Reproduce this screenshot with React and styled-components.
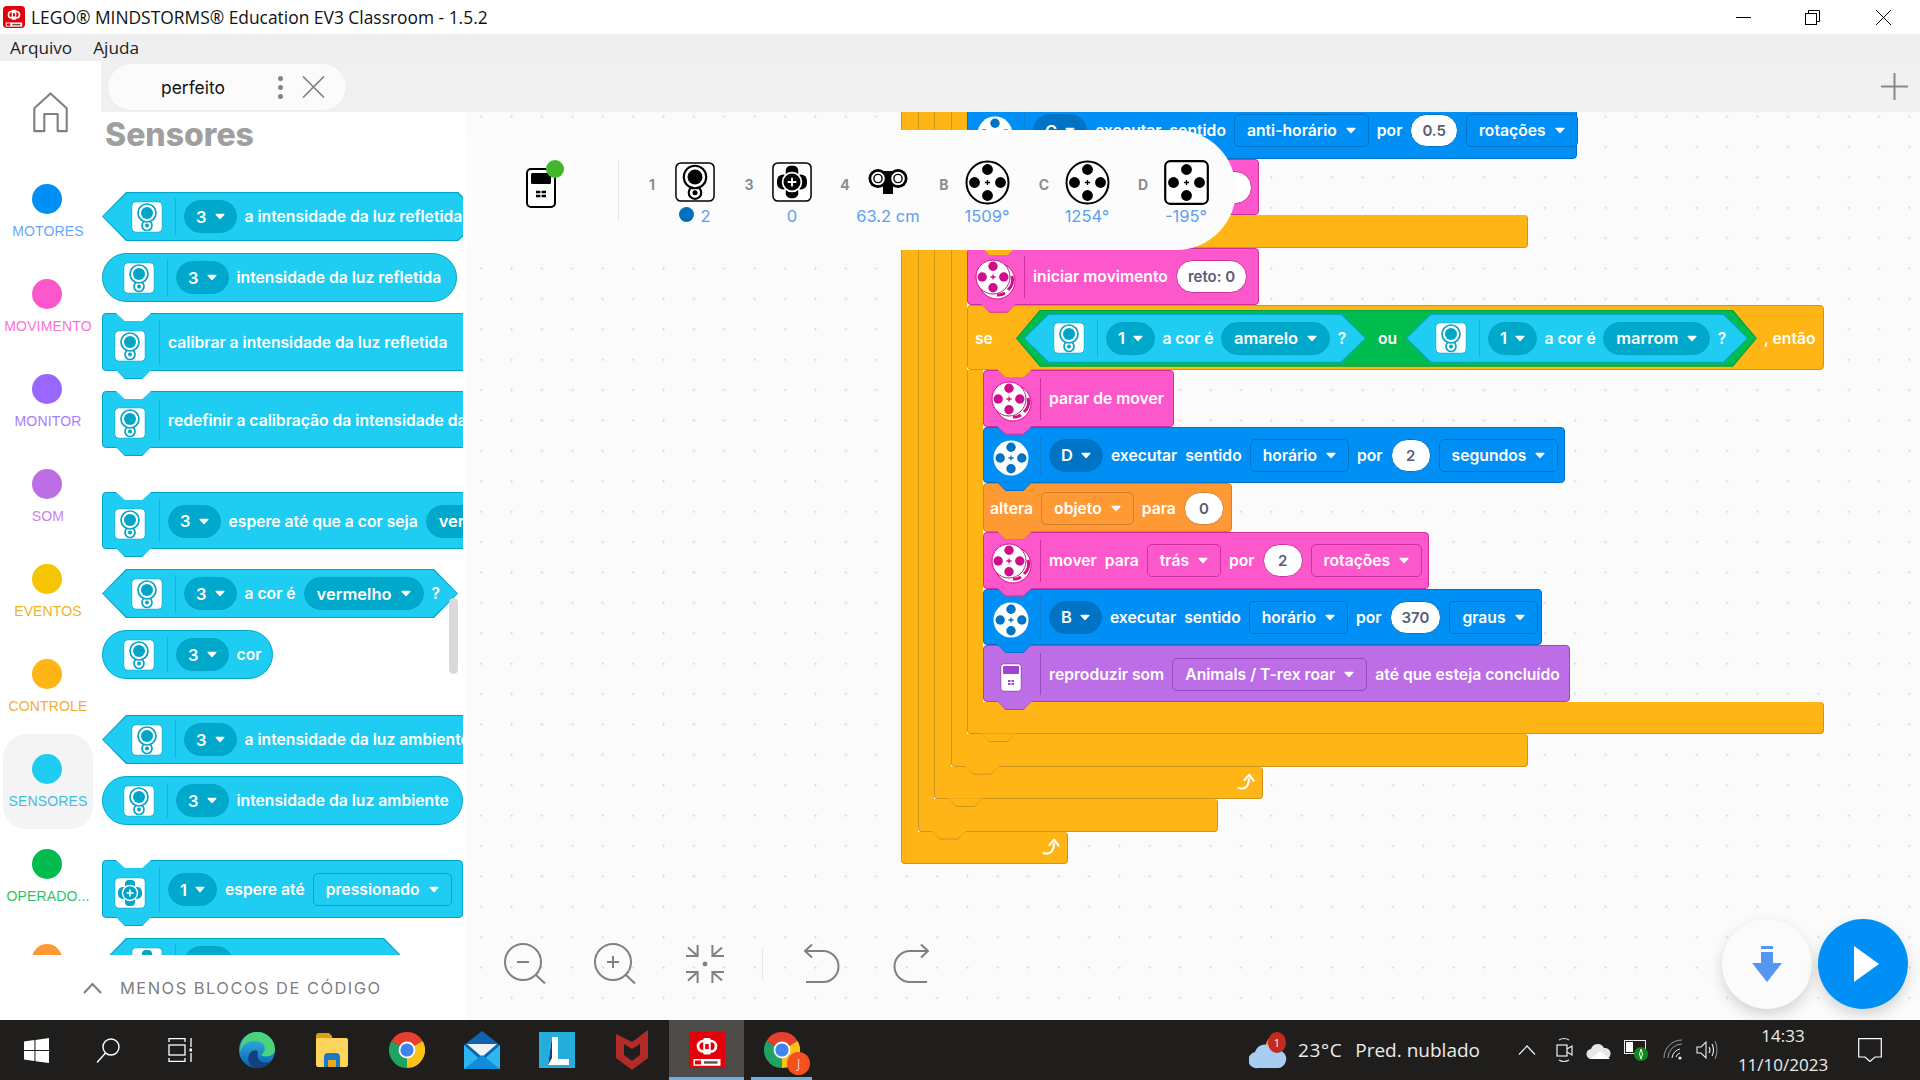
import React from "react";
import styled, { createGlobalStyle, css } from "styled-components";

const GlobalStyle = createGlobalStyle`
  html, body { margin: 0; padding: 0; height: 100%; overflow: hidden; background: #fff; }
  #root { height: 100%; }
  * { box-sizing: border-box; }
`;

const tones = {
  sensor: { fill: "#1fcdf2", edge: "#00a5c8", pill: "#00a8cb", line: "#0fb4d8" },
  motor: { fill: "#0090f5", edge: "#0073c4", pill: "#0073c4", line: "#0a7fd6" },
  move: { fill: "#fc58cc", edge: "#cf2f9e", pill: "#cf2f9e", line: "#cf2f9e" },
  sound: { fill: "#bd6ee6", edge: "#9749bf", pill: "#9749bf", line: "#9749bf" },
  variable: { fill: "#ff9933", edge: "#d47f2a", pill: "#d47f2a", line: "#d47f2a" },
  control: { fill: "#ffb515", edge: "#d09418", pill: "#d09418", line: "#d09418" },
  operator: { fill: "#00bb4d", edge: "#00a043", pill: "#00a043", line: "#00a043" },
};

const toned = css`
  --fill: ${(p) => tones[p.$tone].fill};
  --edge: ${(p) => tones[p.$tone].edge};
  --pill: ${(p) => tones[p.$tone].pill};
  --line: ${(p) => tones[p.$tone].line};
`;

const blockFont = css`
  font-family: Inter, "Open Sans", sans-serif;
  font-weight: 600;
  font-size: 15.7px;
  color: #fff;
`;

const bump = css`
  &::before,
  &::after {
    content: "";
    position: absolute;
    left: ${(p) => p.$bumpLeft ?? 13}px;
    top: 100%;
    width: 35px;
    z-index: 2;
    clip-path: polygon(0 0, 100% 0, 75% 100%, 25% 100%);
  }
  &::before {
    height: 9px;
    background: var(--edge);
  }
  &::after {
    height: 8px;
    background: var(--fill);
  }
`;

/* ---------- window chrome ---------- */

const Page = styled.div`
  width: 100%;
  height: 100vh;
  display: flex;
  flex-direction: column;
  overflow: hidden;
`;

const TitleBar = styled.div`
  height: 34px;
  flex: none;
  display: flex;
  align-items: center;
  background: #fff;
  padding-left: 2px;
`;

const TitleText = styled.span`
  margin-left: 5px;
  font-family: "Open Sans", sans-serif;
  font-size: 17.4px;
  color: #111;
  white-space: pre;
`;

const WindowButtons = styled.div`
  margin-left: auto;
  display: flex;
  align-items: center;
  padding-right: 29px;
  gap: 54px;
  & > svg:last-child {
    margin-left: 2px;
  }
`;

const MenuBar = styled.div`
  height: 27px;
  flex: none;
  display: flex;
  align-items: center;
  gap: 21px;
  padding-left: 10px;
  background: #efefef;
  font-family: "Open Sans", sans-serif;
  font-size: 17.2px;
  color: #222;
`;

const Main = styled.div`
  flex: 1;
  min-height: 0;
  display: grid;
  grid-template-columns: 101px 365px 1fr;
  grid-template-rows: 51px 843px 65px;
  background: #fff;
`;

/* ---------- category rail ---------- */

const Rail = styled.nav`
  grid-column: 1;
  grid-row: 1 / 3;
  background: #fff;
  overflow: hidden;
`;

const HomeSlot = styled.div`
  height: 103px;
  padding: 31px 0 0 32px;
`;

const Category = styled.div`
  width: 90px;
  height: 95px;
  margin-left: 3px;
  padding-top: 20px;
  display: flex;
  flex-direction: column;
  align-items: center;
  border-radius: 24px;
  background: ${(p) => (p.$active ? "#f4f4f4" : "transparent")};
`;

const CategoryDot = styled.span`
  width: 30px;
  height: 30px;
  margin-right: 2px;
  border-radius: 50%;
  background: ${(p) => p.$color};
`;

const CategoryName = styled.span`
  margin-top: 9px;
  font-family: "Liberation Sans", Arial, sans-serif;
  font-size: 14px;
  line-height: 16px;
  letter-spacing: 0.15px;
  color: ${(p) => p.$color};
  opacity: 0.85;
  white-space: nowrap;
`;

/* ---------- tab bar ---------- */

const TabBar = styled.div`
  grid-column: 2 / 4;
  grid-row: 1;
  background: #f0f0f0;
  display: flex;
  align-items: flex-start;
  padding: 3px 12px 0 7px;
`;

const Tab = styled.div`
  width: 238px;
  height: 46px;
  display: flex;
  align-items: center;
  border-radius: 23px;
  background: #fbfbfb;
  box-shadow: 0 0 0 1px #ececec;
`;

const TabName = styled.span`
  width: 170px;
  text-align: center;
  font-family: Inter, sans-serif;
  font-size: 17.4px;
  color: #111;
`;

const TabDots = styled.span`
  display: flex;
  flex-direction: column;
  gap: 4px;
  & > i {
    width: 5px;
    height: 5px;
    border-radius: 50%;
    background: #858585;
  }
`;

const TabClose = styled.svg`
  margin-left: 19px;
`;

const AddTab = styled.svg`
  margin: 9px 0 0 auto;
`;

/* ---------- palette ---------- */

const Palette = styled.aside`
  grid-column: 2;
  grid-row: 2;
  position: relative;
  background: #fff;
  overflow: hidden;
`;

const PaletteTitle = styled.h2`
  margin: 0;
  height: 80px;
  padding: 5px 0 0 4px;
  font-family: Inter, sans-serif;
  font-weight: 800;
  font-size: 32px;
  line-height: 36px;
  color: #9f9f9f;
`;

const PaletteClip = styled.div`
  width: 362px;
  height: 763px;
  padding-left: 1px;
  overflow: hidden;
`;

const PaletteScroll = styled.div`
  position: absolute;
  left: 348px;
  top: 486px;
  width: 9px;
  height: 76px;
  border-radius: 5px;
  background: #d9d9d9;
  z-index: 3;
`;

const Footer = styled.div`
  grid-column: 1 / 3;
  grid-row: 3;
  background: #fff;
  display: flex;
  align-items: center;
  padding: 0 0 0 83px;
  gap: 18px;
  font-family: Inter, sans-serif;
  font-size: 16.5px;
  letter-spacing: 1.45px;
  color: #7f7f7f;
`;

/* ---------- blocks ---------- */

const IconSlot = styled.div`
  flex: none;
  width: 57px;
  height: calc(100% - 12px);
  display: flex;
  align-items: center;
  justify-content: center;
  border-right: 1px solid var(--line);
`;

const StackBlock = styled.div`
  ${toned}
  ${bump}
  ${blockFont}
  position: relative;
  flex: none;
  display: flex;
  align-items: center;
  width: ${(p) => (p.$width ? `${p.$width}px` : "max-content")};
  height: ${(p) => p.$height ?? 56.7}px;
  margin-top: ${(p) => p.$top ?? 0}px;
  padding-top: ${(p) => p.$padTop ?? 1}px;
  background: var(--fill);
  border: 1px solid var(--edge);
  border-radius: 4px;
  & > ${IconSlot} > svg {
    transform: translate(-1px, 3px);
  }
`;

const RoundBlock = styled.div`
  ${toned}
  ${blockFont}
  position: relative;
  display: flex;
  align-items: center;
  width: ${(p) => (p.$width ? `${p.$width}px` : "max-content")};
  height: 49px;
  margin-top: ${(p) => p.$top ?? 0}px;
  padding: 0 12px 0 8px;
  background: var(--fill);
  border: 1px solid var(--edge);
  border-radius: 25px;
`;

const hexPoints = (w) =>
  `polygon(${w}px 0, calc(100% - ${w}px) 0, 100% 50%, calc(100% - ${w}px) 100%, ${w}px 100%, 0 50%)`;

const HexBlock = styled.div`
  ${toned}
  ${blockFont}
  position: relative;
  flex: none;
  display: flex;
  align-items: center;
  width: ${(p) => (p.$width ? `${p.$width}px` : "max-content")};
  height: ${(p) => p.$height ?? 49}px;
  margin-top: ${(p) => p.$top ?? 0}px;
  padding: 0 ${(p) => p.$padRight ?? 20}px 0 ${(p) => p.$padLeft ?? 17}px;
  background: var(--edge);
  clip-path: ${hexPoints(24)};
  &::before {
    content: "";
    position: absolute;
    inset: 1px;
    z-index: -1;
    background: var(--fill);
    clip-path: ${hexPoints(24)};
  }
`;

const Notch = styled.span`
  position: absolute;
  left: 13px;
  top: -1px;
  width: 35px;
  height: 8px;
  background: #fff;
  clip-path: polygon(0 0, 100% 0, 75% 100%, 25% 100%);
`;

const Fields = styled.div`
  display: flex;
  align-items: center;
  gap: ${(p) => p.$gap ?? 8}px;
  padding-left: ${(p) => p.$pad ?? 8}px;
  padding-right: ${(p) => p.$padEnd ?? 0}px;
  white-space: pre;
`;

const MenuField = styled.div`
  flex: none;
  height: 33px;
  min-width: ${(p) => p.$min ?? 0}px;
  display: flex;
  align-items: center;
  justify-content: space-between;
  gap: ${(p) => (p.$round && !p.$wide ? 8 : 9)}px;
  padding: 0 ${(p) => (p.$round && !p.$wide ? 11 : 12)}px;
  border: 1px solid var(--edge);
  border-radius: ${(p) => (p.$round ? "17px" : "5px")};
  background: ${(p) => (p.$round ? "var(--pill)" : "var(--fill)")};
  font-size: ${(p) => (p.$round ? 16.5 : 15.7)}px;
`;

const ValueField = styled.div`
  flex: none;
  min-width: ${(p) => p.$min ?? 40}px;
  height: 33px;
  display: flex;
  align-items: center;
  justify-content: center;
  padding: 0 11px;
  background: #fff;
  border: 1px solid var(--edge);
  border-radius: 17px;
  color: #575e75;
  font-size: 15px;
`;

const Caret = () => (
  <svg width="10" height="7" viewBox="0 0 11 7">
    <path d="M1.2 1.2 H9.8 L5.5 5.8 Z" fill="#fff" stroke="#fff" strokeWidth="1.5" strokeLinejoin="round" />
  </svg>
);

const Pill = ({ children, wide }) => (
  <MenuField $round $wide={wide}>
    {children}
    <Caret />
  </MenuField>
);

const Menu = ({ children, min }) => (
  <MenuField $min={min}>
    {children}
    <Caret />
  </MenuField>
);

/* c-blocks on the canvas */

const CBlock = styled.div`
  ${toned}
  display: flex;
  flex-direction: column;
  align-items: flex-start;
`;

const CMouth = styled.div`
  display: flex;
  align-items: stretch;
`;

const CArm = styled.div`
  flex: none;
  width: ${(p) => p.$width ?? 16.5}px;
  background: var(--fill);
  border-left: 1px solid var(--edge);
`;

const CBody = styled.div`
  display: flex;
  flex-direction: column;
  align-items: flex-start;
`;

const CFoot = styled.div`
  ${(p) => !p.$flat && bump}
  position: relative;
  width: ${(p) => p.$width}px;
  height: 32.4px;
  display: flex;
  align-items: center;
  justify-content: flex-end;
  padding-right: 7px;
  background: var(--fill);
  border: 1px solid var(--edge);
  border-top: none;
  border-radius: 0 4px 4px 4px;
`;

const Band = styled(CFoot)`
  height: 32.6px;
`;

const Canvas = styled.section`
  grid-column: 3;
  grid-row: 2 / 4;
  position: relative;
  overflow: hidden;
  background-color: #fbfbfb;
  background-image: radial-gradient(circle at center, #dfdfdf 0 1px, transparent 1.3px);
  background-size: 30.4px 30.4px;
  background-position: 0px -10.6px;
`;

const Script = styled.div`
  position: absolute;
  left: 435px;
  top: -10px;
`;

/* ---------- robot status panel ---------- */

const StatusPanel = styled.div`
  position: absolute;
  left: 0;
  top: 18px;
  width: 770px;
  height: 120px;
  z-index: 5;
  display: flex;
  align-items: flex-start;
  padding: 30px 0 0 60px;
  background: #fcfcfc;
  border-radius: 0 60px 60px 0;
`;

const BrickSlot = styled.div`
  position: relative;
  flex: none;
  width: 30px;
  margin-top: 8px;
`;

const ConnectedDot = styled.span`
  position: absolute;
  right: -8px;
  top: -8px;
  width: 18px;
  height: 18px;
  border-radius: 50%;
  background: #41b72a;
`;

const PanelDivider = styled.span`
  flex: none;
  width: 1px;
  height: 60px;
  margin: 0 20px 0 62px;
  background: #e6e6e6;
`;

const Port = styled.div`
  flex: none;
  width: ${(p) => p.$width}px;
  display: flex;
  align-items: flex-start;
`;

const PortLabel = styled.span`
  flex: none;
  width: 26px;
  height: 44px;
  line-height: 44px;
  margin-top: 3px;
  text-align: center;
  font-family: Inter, sans-serif;
  font-weight: 700;
  font-size: 14px;
  color: #8c8c8c;
`;

const PortBody = styled.div`
  flex: none;
  width: 58px;
  margin-left: 1px;
  display: flex;
  flex-direction: column;
  align-items: center;
`;

const PortIcon = styled.div`
  height: 44px;
  display: flex;
  align-items: center;
  justify-content: center;
`;

const PortReading = styled.div`
  margin-top: 1px;
  height: 22px;
  display: flex;
  align-items: center;
  gap: 6px;
  font-family: Inter, sans-serif;
  font-size: 16.5px;
  color: #5a9ff0;
  white-space: nowrap;
`;

const ColorMark = styled.span`
  width: 15px;
  height: 15px;
  margin-top: -4px;
  border-radius: 50%;
  background: #006fbe;
`;

/* ---------- canvas tools ---------- */

const ToolRow = styled.div`
  position: absolute;
  left: 38px;
  top: 831px;
  display: flex;
  align-items: center;
  z-index: 4;
`;

const ToolIcon = styled.svg`
  flex: none;
  margin-left: ${(p) => p.$left ?? 0}px;
`;

const ToolDivider = styled.span`
  width: 1px;
  height: 30px;
  margin-left: 36px;
  background: #e4e4e4;
`;

const RunButtons = styled.div`
  position: absolute;
  left: 1256px;
  top: 807px;
  display: flex;
  gap: 6px;
  z-index: 4;
`;

const RoundButton = styled.div`
  width: 90px;
  height: 90px;
  display: flex;
  align-items: center;
  justify-content: center;
  padding-left: ${(p) => p.$nudge ?? 0}px;
  border-radius: 50%;
  background: ${(p) => p.$bg};
  box-shadow: ${(p) => (p.$raised ? "0 6px 14px rgba(0,0,0,.16)" : "none")};
`;

/* ---------- taskbar ---------- */

const Taskbar = styled.div`
  height: 60px;
  flex: none;
  display: flex;
  align-items: center;
  background: #201e1d;
  font-family: "Open Sans", sans-serif;
  color: #ececec;
`;

const SysSlot = styled.div`
  width: 72px;
  height: 60px;
  display: flex;
  align-items: center;
  justify-content: center;
`;

const AppGroup = styled.div`
  display: flex;
  margin-left: 3px;
`;

const AppSlot = styled.div`
  position: relative;
  width: 75px;
  height: 60px;
  display: flex;
  align-items: center;
  justify-content: center;
  background: ${(p) => (p.$active ? "#4d4a48" : "transparent")};
  ${(p) =>
    p.$open &&
    css`
      &::after {
        content: "";
        position: absolute;
        left: ${p.$active ? 0 : 7}px;
        right: ${p.$active ? 0 : 7}px;
        bottom: 0;
        height: 3px;
        background: #6caee0;
      }
    `}
`;

const Tray = styled.div`
  margin-left: auto;
  display: flex;
  align-items: center;
  padding-right: 38px;
`;

const Weather = styled.div`
  position: relative;
  width: 38px;
  height: 40px;
  margin-right: 11px;
`;

const WeatherBadge = styled.span`
  position: absolute;
  right: 1px;
  top: 2px;
  width: 18px;
  height: 21px;
  border-radius: 50%;
  background: #c32a1e;
  font-size: 11px;
  line-height: 21px;
  text-align: center;
  color: #fff;
`;

const TrayText = styled.span`
  font-size: 19px;
  letter-spacing: ${(p) => p.$spread ?? 0}px;
  margin-right: ${(p) => p.$right ?? 0}px;
  white-space: nowrap;
`;

const TrayIcon = styled.svg`
  flex: none;
  margin-right: ${(p) => p.$right ?? 0}px;
`;

const Clock = styled.div`
  width: 100px;
  display: flex;
  flex-direction: column;
  align-items: center;
  gap: 5px;
  font-size: 17px;
  line-height: 24px;
  margin-right: 25px;
`;

/* ---------- drawings ---------- */

const LegoMark = ({ w, h, rx = 4 }) => (
  <svg width={w} height={h} viewBox="0 0 24 24">
    <rect width="24" height="24" rx={rx} fill="#e3000b" />
    <rect x="6" y="6" width="12" height="7" rx="3.5" fill="none" stroke="#fff" strokeWidth="1.8" />
    <rect x="9.5" y="4" width="5" height="11" rx="1" fill="#fff" />
    <rect x="10.8" y="8" width="2.4" height="3.4" fill="#e3000b" />
    <rect x="3" y="18" width="18" height="4.5" fill="#fff" />
    <rect x="4" y="19" width="4" height="2.6" fill="#e3000b" />
    <rect x="10" y="19.5" width="9" height="1.6" fill="#555" />
  </svg>
);

const HomeIcon = () => (
  <svg width="37" height="41" viewBox="0 0 37 43" fill="none" stroke="#7f7f7f" strokeWidth="2.2" strokeLinejoin="round">
    <path d="M1.5 17 L18.5 1.5 L35.5 17 V41 H26 V23 H12 V41 H1.5 Z" />
  </svg>
);

const ColorSensor = ({ color = "#00a5c8", size = 32, frame }) => (
  <svg width={size} height={size} viewBox="0 0 32 32">
    <rect x="0.75" y="0.75" width="30.5" height="30.5" rx="4" fill="#fff" stroke={frame ?? "#0fb4d8"} strokeWidth={frame ? 1.2 : 1} />
    <circle cx="16" cy="24.5" r="5" fill="#fff" stroke={color} strokeWidth="1.7" />
    <circle cx="16" cy="12" r="9" fill="#fff" stroke={color} strokeWidth="1.7" />
    <circle cx="16" cy="12" r="6" fill={color} />
    <circle cx="16" cy="24.5" r="2" fill={color} />
  </svg>
);

const GyroSensor = ({ color = "#00a5c8", size = 32, frame }) => (
  <svg width={size} height={size} viewBox="0 0 32 32">
    <rect x="0.75" y="0.75" width="30.5" height="30.5" rx="4" fill="#fff" stroke={frame ?? "#0fb4d8"} strokeWidth={frame ? 1.2 : 1} />
    <rect x="11" y="3" width="10" height="10" rx="4" fill={color} />
    <rect x="11" y="19" width="10" height="10" rx="4" fill={color} />
    <rect x="4" y="10" width="10" height="12" rx="5" fill={color} />
    <rect x="18" y="10" width="10" height="12" rx="5" fill={color} />
    <circle cx="16" cy="16" r="7.5" fill={color} stroke="#fff" strokeWidth="1.4" />
    <path d="M16 12.5 V19.5 M12.5 16 H19.5" stroke="#fff" strokeWidth="1.5" />
  </svg>
);

const UltrasonicSensor = () => (
  <svg width="40" height="26" viewBox="0 0 40 26">
    <rect x="15" y="17" width="10" height="8" fill="#000" />
    <rect x="9" y="2" width="22" height="15" fill="#000" />
    <circle cx="10" cy="9.5" r="9.5" fill="#000" />
    <circle cx="30" cy="9.5" r="9.5" fill="#000" />
    <circle cx="10" cy="9.5" r="6.8" fill="#fff" />
    <circle cx="30" cy="9.5" r="6.8" fill="#fff" />
    <circle cx="10" cy="9.5" r="4.8" fill="#000" />
    <circle cx="30" cy="9.5" r="4.8" fill="#000" />
    <circle cx="10" cy="9.5" r="3.4" fill="#fff" />
    <circle cx="30" cy="9.5" r="3.4" fill="#fff" />
  </svg>
);

const WheelFace = ({ color, cx = 18, cy = 18, r = 4.7, d = 10.8 }) => (
  <>
    <circle cx={cx} cy={cy - d} r={r} fill={color} />
    <circle cx={cx} cy={cy + d} r={r} fill={color} />
    <circle cx={cx - d} cy={cy} r={r} fill={color} />
    <circle cx={cx + d} cy={cy} r={r} fill={color} />
    <path d={`M${cx} ${cy - 2.6} V${cy + 2.6} M${cx - 2.6} ${cy} H${cx + 2.6}`} stroke={color} strokeWidth="1.3" />
  </>
);

const MotorIcon = ({ color }) => (
  <svg width="36" height="36" viewBox="0 0 36 36">
    <circle cx="18" cy="18" r="17.5" fill="#fff" />
    <WheelFace color={color} />
  </svg>
);

const PortWheel = ({ square }) => (
  <svg width="45" height="45" viewBox="0 0 45 45">
    {square ? (
      <rect x="1.2" y="1.2" width="42.6" height="42.6" rx="5" fill="#fff" stroke="#000" strokeWidth="2.2" />
    ) : (
      <circle cx="22.5" cy="22.5" r="21" fill="#fff" stroke="#000" strokeWidth="2" />
    )}
    <WheelFace color="#000" cx={22.5} cy={22.5} r={5.4} d={13} />
  </svg>
);

const MoveIcon = () => (
  <svg width="41" height="41" viewBox="0 0 41 41">
    <circle cx="22" cy="22" r="18" fill="#fff" stroke="#cf0e8c" strokeWidth="1" />
    <path d="M37 17 A14 14 0 0 1 33 31 M30 34 A12 12 0 0 1 22 36" fill="none" stroke="#cf0e8c" strokeWidth="3" />
    <circle cx="18" cy="18" r="17" fill="#fff" stroke="#cf0e8c" strokeWidth="1" />
    <WheelFace color="#cf0e8c" />
  </svg>
);

const SoundBrick = () => (
  <svg width="22" height="29" viewBox="0 0 22 29">
    <rect x="0.75" y="0.75" width="20.5" height="27.5" rx="3" fill="#fff" stroke="#9749bf" />
    <rect x="3" y="3" width="16" height="8" rx="1" fill="#a241d4" />
    <path d="M8 18 H14 M8 21 H14" stroke="#9749bf" strokeWidth="2" />
    <path d="M11 16 V23" stroke="#fff" strokeWidth="1" />
  </svg>
);

const PanelBrick = () => (
  <svg width="30" height="40" viewBox="0 0 30 40">
    <rect x="1" y="1" width="28" height="38" rx="4" fill="#fff" stroke="#000" strokeWidth="2" />
    <rect x="5" y="5" width="20" height="11" rx="1.5" fill="#000" />
    <path d="M10 24 H20 M10 28 H20" stroke="#000" strokeWidth="2.4" />
    <path d="M15 22 V30" stroke="#fff" strokeWidth="1.2" />
  </svg>
);

const LoopArrow = () => (
  <svg width="18" height="18" viewBox="0 0 18 18" fill="none" stroke="#fff" strokeWidth="2.2" strokeLinecap="round" strokeLinejoin="round">
    <path d="M1.5 15 C6 16.5 11.5 15.5 12 6" />
    <path d="M7.5 7 L12.3 1.8 L16.5 7.5" />
  </svg>
);

const ZoomIcon = ({ plus, left }) => (
  <ToolIcon $left={left} width="44" height="41" viewBox="0 0 44 41" fill="none" stroke="#808080" strokeWidth="2">
    <circle cx="19" cy="19" r="18" />
    <path d="M32 32 L41 40.5" />
    <path d="M13 19 H25" />
    {plus && <path d="M19 13 V25" />}
  </ToolIcon>
);

const RecenterIcon = ({ left }) => (
  <ToolIcon $left={left} width="42" height="40" viewBox="0 0 42 40" fill="none" stroke="#808080" strokeWidth="2">
    <path d="M2 12 H13.6 V1 M13.6 12 L4 3.5" />
    <path d="M40 12 H28.4 V1 M28.4 12 L38 3.5" />
    <path d="M2 28 H13.6 V39 M13.6 28 L4 36.5" />
    <path d="M40 28 H28.4 V39 M28.4 28 L38 36.5" />
    <circle cx="21" cy="20" r="2.4" fill="#808080" stroke="none" />
  </ToolIcon>
);

const UndoIcon = ({ left, flip }) => (
  <ToolIcon $left={left} width="36" height="40" viewBox="0 0 36 40" fill="none" stroke="#808080" strokeWidth="2">
    <g transform={flip ? "matrix(-1 0 0 1 36 0)" : undefined}>
      <path d="M1 7 H19 A15.5 15.5 0 0 1 19 38 H2" />
      <path d="M8 0.5 L1 7 L8 13.5" />
    </g>
  </ToolIcon>
);

const ChromeIcon = ({ size = 36 }) => (
  <svg width={size} height={size} viewBox="0 0 36 36">
    <path d="M18 0 A18 18 0 0 1 33.6 9 L18 18 L2.4 9 A18 18 0 0 1 18 0 Z" fill="#e7402f" />
    <path d="M33.6 9 A18 18 0 0 1 18 36 L18 18 Z" fill="#fbc116" />
    <path d="M18 36 A18 18 0 0 1 2.4 9 L18 18 Z" fill="#1ea362" />
    <circle cx="18" cy="18" r="8.4" fill="#fff" />
    <circle cx="18" cy="18" r="6.6" fill="#3f84ec" />
  </svg>
);

const EdgeIcon = () => (
  <svg width="36" height="36" viewBox="0 0 36 36">
    <defs>
      <linearGradient id="edgeFill" x1="0" y1="0" x2="0" y2="1">
        <stop offset="0" stopColor="#35c1e1" />
        <stop offset="1" stopColor="#0b5fb4" />
      </linearGradient>
    </defs>
    <circle cx="18" cy="18" r="18" fill="url(#edgeFill)" />
    <path d="M18 0 A18 18 0 0 1 36 18 C36 24 26 26 22 23 C28 20 28 8 14 9 C9 9 3 13 1 20 C1 9 8 0 18 0 Z" fill="#4bd37c" />
    <path d="M19 20 C16 30 27 33 31 29 C27 35 22 36 18 36 C10 36 7 27 11 21 C13 18 18 17 19 20 Z" fill="#123f7d" />
  </svg>
);

const FolderIcon = () => (
  <svg width="32" height="34" viewBox="0 0 32 34">
    <path d="M0 3 Q0 0 3 0 H13 L16 3 V8 H0 Z" fill="#dd9f12" />
    <rect y="5" width="32" height="29" rx="2" fill="#ffd45c" />
    <path d="M8 34 V24 Q8 20 12 20 H20 Q24 20 24 24 V34 H20 V27 H12 V34 Z" fill="#1d79c4" />
    <rect x="12" y="27" width="8" height="7" fill="#e8a91a" />
  </svg>
);

const MailIcon = () => (
  <svg width="36" height="38" viewBox="0 0 36 38">
    <path d="M18 0 L36 14 V38 H0 V14 Z" fill="#0d63b0" />
    <path d="M0 14 L18 30 L36 14 V38 H0 Z" fill="#2fb6f0" />
    <path d="M3 13 H33 L18 26 Z" fill="#eef2f5" />
    <path d="M0 38 L18 24 L36 38 Z" fill="#0f8cdb" />
  </svg>
);

const LauncherIcon = () => (
  <svg width="36" height="36" viewBox="0 0 36 36">
    <rect width="36" height="36" fill="#25aedb" />
    <path d="M13 5 H19 V27 H30 V33 H9 Z" fill="#fff" />
    <path d="M13 5 V26 L9 33 Z" fill="#123f8c" />
  </svg>
);

const ShieldIcon = () => (
  <svg width="32" height="40" viewBox="0 0 32 40">
    <path d="M0 4 L16 12 L32 0 V28 L16 40 L0 28 Z" fill="#b22a2a" />
    <path d="M8 14 L16 19 L24 14 V25 L16 31 L8 25 Z" fill="#201e1d" />
  </svg>
);

const AppAvatar = styled.span`
  position: absolute;
  left: 43px;
  top: 32px;
  width: 23px;
  height: 23px;
  border-radius: 50%;
  background: #f4511e;
  color: #ffd0bd;
  font-size: 12px;
  line-height: 23px;
  text-align: center;
`;

const categories = [
  ["MOTORES", "#0090f5", "#4c97ff"],
  ["MOVIMENTO", "#fc58cc", "#fc58cc"],
  ["MONITOR", "#9966ff", "#9966ff"],
  ["SOM", "#bd6ee6", "#bd6ee6"],
  ["EVENTOS", "#f5c402", "#eaa800"],
  ["CONTROLE", "#ffb515", "#f0a010"],
  ["SENSORES", "#1fcdf2", "#1fb4dc", true],
  ["OPERADO...", "#00bb4d", "#00bb4d"],
  ["", "#ff9933", "#ff9933"],
];

const SensorIcon = () => (
  <IconSlot>
    <ColorSensor />
  </IconSlot>
);

const MotorRow = ({ port, sense, amount, unit, unitMin, width }) => (
  <StackBlock $tone="motor" $width={width}>
    <IconSlot>
      <MotorIcon color="#0073c4" />
    </IconSlot>
    <Fields>
      <Pill>{port}</Pill>
      executar  sentido
      <Menu>{sense}</Menu>
      por
      <ValueField>{amount}</ValueField>
      <Menu min={unitMin}>{unit}</Menu>
    </Fields>
  </StackBlock>
);

const App = () => {
  return (
    <Page>
      <GlobalStyle />
      <TitleBar>
        <LegoMark w={24} h={22} />
        <TitleText>LEGO® MINDSTORMS® Education EV3 Classroom - 1.5.2</TitleText>
        <WindowButtons>
          <svg width="15" height="15" viewBox="0 0 15 15" stroke="#000">
            <path d="M0 7.5 H15" />
          </svg>
          <svg width="15" height="15" viewBox="0 0 15 15" fill="none" stroke="#000">
            <path d="M3.5 3 V.5 H14.5 V11.5 H12" />
            <rect x=".5" y="3.5" width="11" height="11" />
          </svg>
          <svg width="15" height="15" viewBox="0 0 15 15" stroke="#000">
            <path d="M0 0 L15 15 M15 0 L0 15" />
          </svg>
        </WindowButtons>
      </TitleBar>
      <MenuBar>
        <span>Arquivo</span>
        <span>Ajuda</span>
      </MenuBar>

      <Main>
        <Rail>
          <HomeSlot>
            <HomeIcon />
          </HomeSlot>
          {categories.map(([name, dot, label, active]) => (
            <Category key={dot} $active={active}>
              <CategoryDot $color={dot} />
              <CategoryName $color={label}>{name}</CategoryName>
            </Category>
          ))}
        </Rail>

        <TabBar>
          <Tab>
            <TabName>perfeito</TabName>
            <TabDots>
              <i />
              <i />
              <i />
            </TabDots>
            <TabClose width="23" height="22" viewBox="0 0 23 22" stroke="#7f7f7f" strokeWidth="1.6">
              <path d="M1 0.5 L22 21.5 M22 0.5 L1 21.5" />
            </TabClose>
          </Tab>
          <AddTab width="27" height="27" viewBox="0 0 27 27" stroke="#888" strokeWidth="2">
            <path d="M13.5 0 V27 M0 13.5 H27" />
          </AddTab>
        </TabBar>

        <Palette>
          <PaletteTitle>Sensores</PaletteTitle>
          <PaletteClip>
            <HexBlock $tone="sensor">
              <SensorIcon />
              <Fields>
                <Pill>3</Pill>a intensidade da luz refletida
              </Fields>
            </HexBlock>
            <RoundBlock $tone="sensor" $top={12} $width={355}>
              <SensorIcon />
              <Fields>
                <Pill>3</Pill>intensidade da luz refletida
              </Fields>
            </RoundBlock>
            <StackBlock $tone="sensor" $top={11} $height={58} $width={420}>
              <Notch />
              <SensorIcon />
              <Fields>calibrar a intensidade da luz refletida</Fields>
            </StackBlock>
            <StackBlock $tone="sensor" $top={20} $height={57}>
              <Notch />
              <SensorIcon />
              <Fields>redefinir a calibração da intensidade da luz refletida</Fields>
            </StackBlock>
            <StackBlock $tone="sensor" $top={44} $height={57}>
              <Notch />
              <SensorIcon />
              <Fields>
                <Pill>3</Pill>
                espere até que a cor seja
                <Pill wide>vermelho</Pill>
              </Fields>
            </StackBlock>
            <HexBlock $tone="sensor" $top={20} $width={356}>
              <SensorIcon />
              <Fields>
                <Pill>3</Pill>a cor é<Pill wide>vermelho</Pill>?
              </Fields>
            </HexBlock>
            <RoundBlock $tone="sensor" $top={12} $width={171}>
              <SensorIcon />
              <Fields>
                <Pill>3</Pill>cor
              </Fields>
            </RoundBlock>
            <HexBlock $tone="sensor" $top={36}>
              <SensorIcon />
              <Fields>
                <Pill>3</Pill>a intensidade da luz ambiente
              </Fields>
            </HexBlock>
            <RoundBlock $tone="sensor" $top={12} $width={361}>
              <SensorIcon />
              <Fields>
                <Pill>3</Pill>intensidade da luz ambiente
              </Fields>
            </RoundBlock>
            <StackBlock $tone="sensor" $top={35} $height={58} $width={361}>
              <Notch />
              <IconSlot>
                <GyroSensor />
              </IconSlot>
              <Fields>
                <Pill>1</Pill>
                espere até
                <Menu>pressionado</Menu>
              </Fields>
            </StackBlock>
            <HexBlock $tone="sensor" $top={20} $width={306}>
              <IconSlot>
                <GyroSensor />
              </IconSlot>
              <Fields>
                <Pill>1</Pill>
              </Fields>
            </HexBlock>
          </PaletteClip>
          <PaletteScroll />
        </Palette>

        <Footer>
          <svg width="19" height="12" viewBox="0 0 19 12" fill="none" stroke="#7f7f7f" strokeWidth="2">
            <path d="M1 11 L9.5 2 L18 11" />
          </svg>
          MENOS BLOCOS DE CÓDIGO
        </Footer>

        <Canvas>
          <Script>
            <CBlock $tone="control">
              <CMouth>
                <CArm />
                <CBody>
                  <CBlock $tone="control">
                    <CMouth>
                      <CArm />
                      <CBody>
                        <CBlock $tone="control">
                          <CMouth>
                            <CArm />
                            <CBody>
                              <CBlock $tone="control">
                                <CMouth>
                                  <CArm />
                                  <CBody>
                                    <MotorRow port="C" sense="anti-horário" amount="0.5" unit="rotações" unitMin={106} width={610} />
                                    <StackBlock $tone="move" $width={292}>
                                      <Fields $pad={212}>
                                        <ValueField $min={72} />
                                      </Fields>
                                    </StackBlock>
                                    <Band $width={561} />
                                    <StackBlock $tone="move" $width={292}>
                                      <IconSlot>
                                        <MoveIcon />
                                      </IconSlot>
                                      <Fields>
                                        iniciar movimento
                                        <ValueField>reto: 0</ValueField>
                                      </Fields>
                                    </StackBlock>
                                    <StackBlock $tone="control" $width={857} $height={65.3} $bumpLeft={29} $padTop={2}>
                                      <Fields $pad={7} $gap={23}>
                                        se
                                        <HexBlock $tone="operator" $width={741} $height={57} $padLeft={8} $padRight={0}>
                                          <HexBlock $tone="sensor" $width={342} $padRight={0}>
                                            <SensorIcon />
                                            <Fields $gap={7.5}>
                                              <Pill>1</Pill>a cor é<Pill wide>amarelo</Pill>?
                                            </Fields>
                                          </HexBlock>
                                          <Fields $pad={12} $padEnd={9}>
                                            ou
                                          </Fields>
                                          <HexBlock $tone="sensor" $width={342} $padRight={0}>
                                            <SensorIcon />
                                            <Fields $gap={7.5}>
                                              <Pill>1</Pill>a cor é<Pill wide>marrom</Pill>?
                                            </Fields>
                                          </HexBlock>
                                        </HexBlock>
                                      </Fields>
                                      <Fields $pad={7}>, então</Fields>
                                    </StackBlock>
                                    <CBlock $tone="control">
                                      <CMouth>
                                        <CArm $width={16} />
                                        <CBody>
                                          <StackBlock $tone="move" $width={191}>
                                            <IconSlot>
                                              <MoveIcon />
                                            </IconSlot>
                                            <Fields>parar de mover</Fields>
                                          </StackBlock>
                                          <MotorRow port="D" sense="horário" amount="2" unit="segundos" width={582} />
                                          <StackBlock $tone="variable" $width={249} $height={48.6}>
                                            <Fields $pad={6}>
                                              altera
                                              <Menu>objeto</Menu>
                                              para
                                              <ValueField>0</ValueField>
                                            </Fields>
                                          </StackBlock>
                                          <StackBlock $tone="move" $width={446}>
                                            <IconSlot>
                                              <MoveIcon />
                                            </IconSlot>
                                            <Fields>
                                              mover  para
                                              <Menu>trás</Menu>
                                              por
                                              <ValueField>2</ValueField>
                                              <Menu min={108}>rotações</Menu>
                                            </Fields>
                                          </StackBlock>
                                          <MotorRow port="B" sense="horário" amount="370" unit="graus" width={559} />
                                          <StackBlock $tone="sound" $width={587}>
                                            <IconSlot>
                                              <SoundBrick />
                                            </IconSlot>
                                            <Fields>
                                              reproduzir som
                                              <Menu>Animals / T-rex roar</Menu>
                                              até que esteja concluído
                                            </Fields>
                                          </StackBlock>
                                        </CBody>
                                      </CMouth>
                                      <CFoot $width={857} />
                                    </CBlock>
                                  </CBody>
                                </CMouth>
                                <CFoot $width={577} />
                              </CBlock>
                            </CBody>
                          </CMouth>
                          <CFoot $width={329}>
                            <LoopArrow />
                          </CFoot>
                        </CBlock>
                      </CBody>
                    </CMouth>
                    <CFoot $width={300} />
                  </CBlock>
                </CBody>
              </CMouth>
              <CFoot $width={167} $flat>
                <LoopArrow />
              </CFoot>
            </CBlock>
          </Script>

          <StatusPanel>
            <BrickSlot>
              <PanelBrick />
              <ConnectedDot />
            </BrickSlot>
            <PanelDivider />
            <Port $width={97}>
              <PortLabel>1</PortLabel>
              <PortBody>
                <PortIcon>
                  <ColorSensor color="#000" size={40} frame="#000" />
                </PortIcon>
                <PortReading>
                  <ColorMark />2
                </PortReading>
              </PortBody>
            </Port>
            <Port $width={96}>
              <PortLabel>3</PortLabel>
              <PortBody>
                <PortIcon>
                  <GyroSensor color="#000" size={40} frame="#000" />
                </PortIcon>
                <PortReading>0</PortReading>
              </PortBody>
            </Port>
            <Port $width={99}>
              <PortLabel>4</PortLabel>
              <PortBody>
                <PortIcon>
                  <UltrasonicSensor />
                </PortIcon>
                <PortReading>63.2 cm</PortReading>
              </PortBody>
            </Port>
            <Port $width={100}>
              <PortLabel>B</PortLabel>
              <PortBody>
                <PortIcon>
                  <PortWheel />
                </PortIcon>
                <PortReading>1509°</PortReading>
              </PortBody>
            </Port>
            <Port $width={99}>
              <PortLabel>C</PortLabel>
              <PortBody>
                <PortIcon>
                  <PortWheel />
                </PortIcon>
                <PortReading>1254°</PortReading>
              </PortBody>
            </Port>
            <Port $width={90}>
              <PortLabel>D</PortLabel>
              <PortBody>
                <PortIcon>
                  <PortWheel square />
                </PortIcon>
                <PortReading>-195°</PortReading>
              </PortBody>
            </Port>
          </StatusPanel>

          <ToolRow>
            <ZoomIcon />
            <ZoomIcon plus left={46} />
            <RecenterIcon left={46} />
            <ToolDivider />
            <UndoIcon left={41} />
            <UndoIcon flip left={53} />
          </ToolRow>

          <RunButtons>
            <RoundButton $bg="#fbfbfb" $raised>
              <svg width="30" height="36" viewBox="0 0 30 36" fill="#5596f0">
                <rect x="9" y="0" width="12" height="3" />
                <path d="M9 6 H21 V17 H30 L15 36 L0 17 H9 Z" />
              </svg>
            </RoundButton>
            <RoundButton $bg="#0090f5" $raised $nudge={6}>
              <svg width="25" height="36" viewBox="0 0 25 36" fill="#fff">
                <path d="M0 0 L25 18 L0 36 Z" />
              </svg>
            </RoundButton>
          </RunButtons>
        </Canvas>
      </Main>

      <Taskbar>
        <SysSlot>
          <svg width="25" height="25" viewBox="0 0 24 24" fill="#fff">
            <path d="M0 3.4 L10 2 V11.5 H0 Z M11 1.8 L24 0 V11.5 H11 Z M0 12.5 H10 V22 L0 20.6 Z M11 12.5 H24 V24 L11 22.2 Z" />
          </svg>
        </SysSlot>
        <SysSlot>
          <svg width="24" height="25" viewBox="0 0 24 25" fill="none" stroke="#fff" strokeWidth="1.4">
            <circle cx="15" cy="9" r="8" />
            <path d="M9.5 15 L1 24.5" />
          </svg>
        </SysSlot>
        <SysSlot>
          <svg width="24" height="24" viewBox="0 0 24 24" fill="none" stroke="#fff" strokeWidth="1.3">
            <path d="M1 4 V.7 H17 V4 M1 20 V23.3 H17 V20 M23 0 V9 M23 15 V24" />
            <rect x="1" y="7" width="16" height="10" />
            <rect x="21.5" y="10.5" width="3" height="3" fill="#fff" stroke="none" />
          </svg>
        </SysSlot>
        <AppGroup>
          <AppSlot>
            <EdgeIcon />
          </AppSlot>
          <AppSlot>
            <FolderIcon />
          </AppSlot>
          <AppSlot>
            <ChromeIcon />
          </AppSlot>
          <AppSlot>
            <MailIcon />
          </AppSlot>
          <AppSlot>
            <LauncherIcon />
          </AppSlot>
          <AppSlot>
            <ShieldIcon />
          </AppSlot>
          <AppSlot $active $open>
            <LegoMark w={36} h={36} rx={0} />
          </AppSlot>
          <AppSlot $open>
            <ChromeIcon />
            <AppAvatar>J</AppAvatar>
          </AppSlot>
        </AppGroup>

        <Tray>
          <Weather>
            <svg width="38" height="40" viewBox="0 0 38 40">
              <circle cx="26" cy="15" r="9" fill="#ef8a2c" />
              <path d="M9 38 A8 8 0 0 1 6 22 A11 11 0 0 1 26 20 A9 9 0 0 1 30 38 Z" fill="#a9cdf0" />
            </svg>
            <WeatherBadge>1</WeatherBadge>
          </Weather>
          <TrayText $right={13} $spread={0.6}>
            23°C
          </TrayText>
          <TrayText $right={38}>Pred. nublado</TrayText>
          <TrayIcon $right={20} width="18" height="10" viewBox="0 0 18 10" fill="none" stroke="#eee" strokeWidth="1.2">
            <path d="M1 9.5 L9 1 L17 9.5" />
          </TrayIcon>
          <TrayIcon $right={13} width="17" height="26" viewBox="0 0 17 26" fill="none" stroke="#eee" strokeWidth="1.2">
            <rect x="1" y="8" width="10" height="11" />
            <path d="M11 12 L16 9 V18 L11 15" />
            <path d="M3 3 Q8 0 13 3 M3 23 Q8 26 13 23" />
          </TrayIcon>
          <TrayIcon $right={13} width="25" height="17" viewBox="0 0 25 17">
            <path d="M6 17 A5 5 0 0 1 5 7 A7 7 0 0 1 18 6 A5.5 5.5 0 0 1 20 17 Z" fill="#e6e6e6" />
            <path d="M4 17 L14 9 L24 17 Z" fill="#fff" />
          </TrayIcon>
          <TrayIcon $right={14} width="25" height="22" viewBox="0 0 25 22">
            <rect x=".5" y="1.5" width="21" height="13" fill="none" stroke="#eee" />
            <rect x="2" y="3" width="7" height="10" fill="#fff" />
            <circle cx="17" cy="15" r="7" fill="#0f8a1f" />
            <path d="M17 10 Q14 15 17 20 Q20 15 17 10" fill="none" stroke="#fff" />
          </TrayIcon>
          <TrayIcon $right={12} width="21" height="22" viewBox="0 0 21 22" fill="none" stroke="#999" strokeWidth="1">
            <path d="M1 19 A18 18 0 0 1 19 1 M5 19 A14 14 0 0 1 19 5" />
            <path d="M9 19 A10 10 0 0 1 17 10 M13 18 A6 6 0 0 1 17 14" stroke="#eee" />
            <circle cx="17" cy="19" r="1.6" fill="#eee" stroke="none" />
          </TrayIcon>
          <TrayIcon $right={15} width="22" height="22" viewBox="0 0 22 22" fill="none" stroke="#eee" strokeWidth="1.1">
            <path d="M1 8 H5 L10 3 V19 L5 14 H1 Z" />
            <path d="M13 8 Q15 11 13 14 M16 5 Q19 11 16 17" />
            <path d="M19 2 Q23 11 19 20" stroke="#888" />
          </TrayIcon>
          <Clock>
            <span>14:33</span>
            <span>11/10/2023</span>
          </Clock>
          <svg width="24" height="24" viewBox="0 0 24 24" fill="none" stroke="#fff" strokeWidth="1.2">
            <path d="M.7 .7 H23.3 V19 H17 L12 23.5 L7 19 H.7 Z" />
          </svg>
        </Tray>
      </Taskbar>
    </Page>
  );
};

export default App;
